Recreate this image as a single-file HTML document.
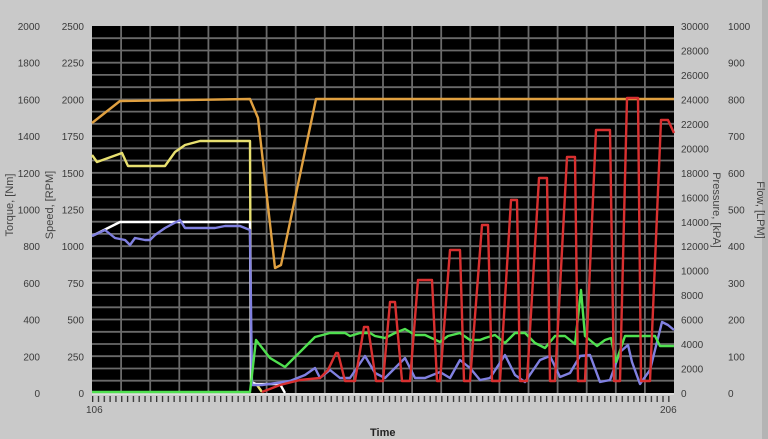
<!DOCTYPE html>
<html><head><style>
html,body{margin:0;padding:0;background:#c9c9c9;}
svg{display:block;font-family:"Liberation Sans",sans-serif;}
</style></head><body>
<svg width="768" height="439" viewBox="0 0 768 439" xmlns="http://www.w3.org/2000/svg">
<defs>
<pattern id="xt" x="92" y="0" width="5.82" height="439" patternUnits="userSpaceOnUse"><rect x="0" y="396" width="1.3" height="6" fill="#333"/></pattern>
<pattern id="yd" x="0" y="26" width="10" height="7.34" patternUnits="userSpaceOnUse"><rect x="0" y="0" width="1.5" height="1.3" fill="#555"/></pattern>
<pattern id="yd2" x="0" y="26" width="10" height="4.9" patternUnits="userSpaceOnUse"><rect x="0" y="0" width="1.5" height="1.3" fill="#555"/></pattern>
</defs>
<rect width="768" height="439" fill="#c9c9c9"/>
<rect x="762" y="0" width="6" height="439" fill="#b4b4b4"/>
<rect x="92" y="26" width="582" height="367" fill="#000"/>
<g stroke="#6a6a6a" stroke-width="1.8">
<path d="M121.1 26V393M150.2 26V393M179.3 26V393M208.4 26V393M237.5 26V393M266.6 26V393M295.7 26V393M324.8 26V393M353.9 26V393M383 26V393M412.1 26V393M441.2 26V393M470.3 26V393M499.4 26V393M528.5 26V393M557.6 26V393M586.7 26V393M615.8 26V393M644.9 26V393"/>
<path d="M92 38.2H674M92 50.5H674M92 62.7H674M92 74.9H674M92 87.2H674M92 99.4H674M92 111.6H674M92 123.8H674M92 136.1H674M92 148.3H674M92 160.5H674M92 172.8H674M92 185H674M92 197.2H674M92 209.5H674M92 221.7H674M92 233.9H674M92 246.2H674M92 258.4H674M92 270.6H674M92 282.8H674M92 295.1H674M92 307.3H674M92 319.5H674M92 331.8H674M92 344H674M92 356.2H674M92 368.5H674M92 380.7H674"/>
</g>
<rect x="92" y="393" width="582" height="2" fill="#ddd"/>
<rect x="92" y="393" width="582" height="10" fill="url(#xt)"/>
<rect x="44" y="26" width="2" height="368" fill="url(#yd)"/>
<rect x="88" y="26" width="2" height="368" fill="url(#yd)"/>
<rect x="676" y="26" width="2" height="368" fill="url(#yd2)"/>
<rect x="723" y="26" width="2" height="368" fill="url(#yd)"/>
<g fill="none" stroke-width="2.4" stroke-linejoin="round">
<polyline stroke="#e0a040" points="92,123 120,101 250,99 258,118 275,268 281,265 316,99 674,99"/>
<polyline stroke="#e8e070" points="92,155 97,162 122,153 128,166 165,166 175,152 185,145 200,141 250,141 251,382 257,385 262,392"/>
<polyline stroke="#ffffff" points="92,236 120,222 250,222 251,382 256,384 280,384 285,393"/>
<polyline stroke="#8080e0" points="92,236 105,230 115,238 125,240 130,245 135,238 145,240 150,240 155,235 165,228 180,220 185,228 200,228 215,228 225,226 240,226 250,230 252,385 262,385 290,381 305,375 315,368 320,378 330,370 340,378 350,378 365,356 375,373 385,378 395,368 405,358 415,378 425,378 440,372 450,378 460,360 470,368 480,380 490,378 505,355 515,375 525,382 540,360 550,356 560,377 570,373 580,356 590,355 600,382 610,380 620,352 628,345 632,362 640,384 650,370 662,322 668,325 674,330"/>
<polyline stroke="#50e050" points="92,392 250,392 256,340 270,358 285,367 300,352 315,337 330,333 345,333 350,336 360,333 370,333 375,336 385,338 395,333 405,329 415,335 425,335 440,342 448,336 460,333 470,340 480,340 485,338 495,335 505,343 515,333 525,333 535,343 545,348 555,336 565,336 575,344 581,290 585,336 597,346 605,340 611,338 616,362 625,336 655,336 660,346 674,346"/>
<polyline stroke="#d83030" points="262,392 280,385 300,380 320,378 328,370 336,353 338,353 345,381 355,381 364,327 368,327 376,381 383,381 390,302 395,302 402,381 410,381 418,280 432,280 437,381 440,381 450,250 460,250 464,381 470,381 482,225 488,225 492,381 500,381 511,200 517,200 520,381 527,381 539,178 547,178 550,381 555,381 567,157 575,157 578,381 585,381 596,130 610,130 614,381 620,381 627,98 638,98 641,381 650,381 661,120 668,120 674,133"/>
</g>
<g font-size="10" fill="#3a3a3a" text-anchor="end">
<text x="40" y="30">2000</text><text x="40" y="66.7">1800</text><text x="40" y="103.4">1600</text><text x="40" y="140.1">1400</text><text x="40" y="176.8">1200</text><text x="40" y="213.5">1000</text><text x="40" y="250.2">800</text><text x="40" y="286.9">600</text><text x="40" y="323.6">400</text><text x="40" y="360.3">200</text><text x="40" y="397">0</text>
<text x="84" y="30">2500</text><text x="84" y="66.7">2250</text><text x="84" y="103.4">2000</text><text x="84" y="140.1">1750</text><text x="84" y="176.8">1500</text><text x="84" y="213.5">1250</text><text x="84" y="250.2">1000</text><text x="84" y="286.9">750</text><text x="84" y="323.6">500</text><text x="84" y="360.3">250</text><text x="84" y="397">0</text>
</g>
<g font-size="10" fill="#3a3a3a">
<text x="681" y="30">30000</text><text x="681" y="54.5">28000</text><text x="681" y="79">26000</text><text x="681" y="103.4">24000</text><text x="681" y="127.9">22000</text><text x="681" y="152.4">20000</text><text x="681" y="176.8">18000</text><text x="681" y="201.3">16000</text><text x="681" y="225.8">14000</text><text x="681" y="250.2">12000</text><text x="681" y="274.7">10000</text><text x="681" y="299.2">8000</text><text x="681" y="323.6">6000</text><text x="681" y="348.1">4000</text><text x="681" y="372.6">2000</text><text x="681" y="397">0</text>
<text x="728" y="30">1000</text><text x="728" y="66.7">900</text><text x="728" y="103.4">800</text><text x="728" y="140.1">700</text><text x="728" y="176.8">600</text><text x="728" y="213.5">500</text><text x="728" y="250.2">400</text><text x="728" y="286.9">300</text><text x="728" y="323.6">200</text><text x="728" y="360.3">100</text><text x="728" y="397">0</text>
<text x="86" y="413">106</text><text x="660" y="413">206</text>
<text x="370" y="436" font-size="11" font-weight="bold" fill="#222">Time</text>
</g>
<g font-size="11" fill="#444" text-anchor="middle">
<text transform="translate(13,205) rotate(-90)">Torque, [Nm]</text>
<text transform="translate(53,205) rotate(-90)">Speed, [RPM]</text>
<text transform="translate(713,210) rotate(90)">Pressure, [kPA]</text>
<text transform="translate(757,210) rotate(90)">Flow, [LPM]</text>
</g>
</svg>
</body></html>
